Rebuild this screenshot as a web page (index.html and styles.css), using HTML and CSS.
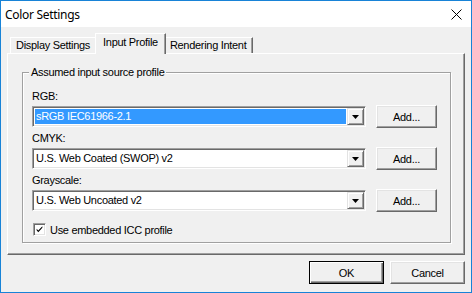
FILE: index.html
```html
<!DOCTYPE html>
<html lang="en">
<head>
  <meta charset="UTF-8" />
  <title>Color Settings</title>
  <link rel="stylesheet" href="styles.css">
</head>
<body>
  <div class="window">
    <div class="titlebar">
      <span class="title">Color Settings</span>
      <svg class="close" viewBox="0 0 11 11"><path d="M0.5 0.5L10.5 10.5M10.5 0.5L0.5 10.5" stroke="#000" stroke-width="1"/></svg>
    </div>
    <div class="content">
      <div class="tabs">
        <div class="tab">Display Settings</div>
        <div class="tab active">Input Profile</div>
        <div class="tab">Rendering Intent</div>
      </div>
      <div class="panel">
        <fieldset class="group">
          <legend>Assumed input source profile</legend>
          <div class="field">
            <label>RGB:</label>
            <div class="field-row">
              <div class="combo">
                <span class="combo-value selected">sRGB IEC61966-2.1</span>
                <span class="combo-btn"><svg viewBox="0 0 7 4"><path d="M0 0h7L3.5 4z"/></svg></span>
              </div>
              <button class="btn">Add...</button>
            </div>
          </div>
          <div class="field">
            <label>CMYK:</label>
            <div class="field-row">
              <div class="combo">
                <span class="combo-value">U.S. Web Coated (SWOP) v2</span>
                <span class="combo-btn"><svg viewBox="0 0 7 4"><path d="M0 0h7L3.5 4z"/></svg></span>
              </div>
              <button class="btn">Add...</button>
            </div>
          </div>
          <div class="field">
            <label>Grayscale:</label>
            <div class="field-row">
              <div class="combo">
                <span class="combo-value">U.S. Web Uncoated v2</span>
                <span class="combo-btn"><svg viewBox="0 0 7 4"><path d="M0 0h7L3.5 4z"/></svg></span>
              </div>
              <button class="btn">Add...</button>
            </div>
          </div>
          <label class="check">
            <span class="checkbox"><svg viewBox="0 0 11 11"><path d="M2 4.5l2 2.2 5-5.2v2L4 8.8 2 6.5z" fill="#000"/></svg></span>
            Use embedded ICC profile
          </label>
        </fieldset>
      </div>
      <div class="footer">
        <button class="btn default">OK</button>
        <button class="btn">Cancel</button>
      </div>
    </div>
  </div>
</body>
</html>
```

FILE: styles.css
```css
* { box-sizing: border-box; }
body {
  margin: 0;
  font-family: 'Liberation Sans', Arial, sans-serif;
  font-size: 11px;
  letter-spacing: -0.3px;
  color: #000;
  background: #fff;
}
.window {
  width: 472px;
  height: 293px;
  border: 1px solid #1883d7;
  display: flex;
  flex-direction: column;
  background: #f0f0f0;
}
.titlebar {
  height: 26px;
  background: #fff;
  display: flex;
  align-items: center;
  justify-content: space-between;
  padding: 0 9px 0 4px;
}
.title {
  font-family: 'Noto Sans', sans-serif;
  font-size: 12px;
}
.close { width: 11px; height: 11px; }
.content {
  flex: 1;
  padding: 6px 6px 0 6px;
}

/* tabs */
.tabs {
  display: flex;
  align-items: flex-end;
  height: 20px;
  padding-left: 3px;
}
.tab {
  height: 16px;
  line-height: 15px;
  padding: 0 6px 0 5px;
  border-top: 1px solid #fff;
  border-left: 1px solid #fff;
  border-right: 1px solid #696969;
  box-shadow: inset -1px 0 #a0a0a0;
  white-space: nowrap;
}
.tab.active {
  position: relative;
  z-index: 1;
  height: 21px;
  line-height: 17px;
  margin: 0 -2px -1px -2px;
  padding: 0 7px 0 7px;
  background: #f0f0f0;
}
.panel {
  height: 202px;
  border: 1px solid;
  border-color: #fff #696969 #696969 #fff;
  box-shadow: inset -1px -1px #a0a0a0;
  padding: 12px 13px 0 14px;
}

/* group box */
.group {
  margin: 0;
  min-width: 0;
  padding: 0 11px 6px 9px;
  border: 1px solid #a0a0a0;
  box-shadow: inset 1px 1px #fff, 1px 1px #fff;
}
.group legend {
  margin-left: -3px;
  padding: 0 2px;
  line-height: 13px;
  background: #f0f0f0;
}
.field:first-of-type { margin-top: 11px; }
.field + .field { margin-top: 4px; }
.field label {
  display: block;
  line-height: 13px;
  margin-bottom: 2px;
}
.field-row {
  display: flex;
  align-items: center;
  gap: 10px;
  height: 23px;
}
.combo {
  width: 334px;
  height: 21px;
  display: flex;
  align-items: center;
  background: #fff;
  border: 1px solid;
  border-color: #a0a0a0 #fff #fff #a0a0a0;
  box-shadow: inset 1px 1px #696969, inset -1px -1px #e3e3e3;
  padding: 1px;
}
.combo-value {
  flex: 1;
  height: 15px;
  line-height: 15px;
  margin: 0 1px;
  padding-left: 1px;
  white-space: nowrap;
}
.combo-value.selected {
  background: #3399ff;
  color: #fff;
}
.combo-btn {
  width: 17px;
  height: 17px;
  display: flex;
  align-items: center;
  justify-content: center;
  background: #f0f0f0;
  border: 1px solid;
  border-color: #e3e3e3 #696969 #696969 #e3e3e3;
  box-shadow: inset 1px 1px #fff, inset -1px -1px #a0a0a0;
}
.combo-btn svg { width: 7px; height: 4px; }

/* buttons */
.btn {
  width: 61px;
  height: 23px;
  padding: 0;
  font: inherit;
  letter-spacing: inherit;
  color: #000;
  background: #f0f0f0;
  border: 1px solid;
  border-color: #fff #696969 #696969 #fff;
  box-shadow: inset -1px -1px #a0a0a0, inset 1px 1px #e3e3e3;
}
.btn.default {
  border-color: #000;
  box-shadow: inset 1px 1px #fff, inset -1px -1px #696969, inset -2px -2px #a0a0a0;
}

/* checkbox */
.check {
  display: flex;
  align-items: center;
  gap: 4px;
  height: 13px;
  margin: 11px 0 0 1px;
}
.checkbox {
  width: 13px;
  height: 13px;
  display: flex;
  align-items: center;
  justify-content: center;
  background: #fff;
  border: 1px solid;
  border-color: #a0a0a0 #fff #fff #a0a0a0;
  box-shadow: inset 1px 1px #696969, inset -1px -1px #e3e3e3;
}
.checkbox svg { width: 9px; height: 9px; }

.footer {
  display: flex;
  justify-content: flex-end;
  gap: 6px;
  padding: 6px 0 0 0;
}
.footer .btn { width: 75px; }
```
